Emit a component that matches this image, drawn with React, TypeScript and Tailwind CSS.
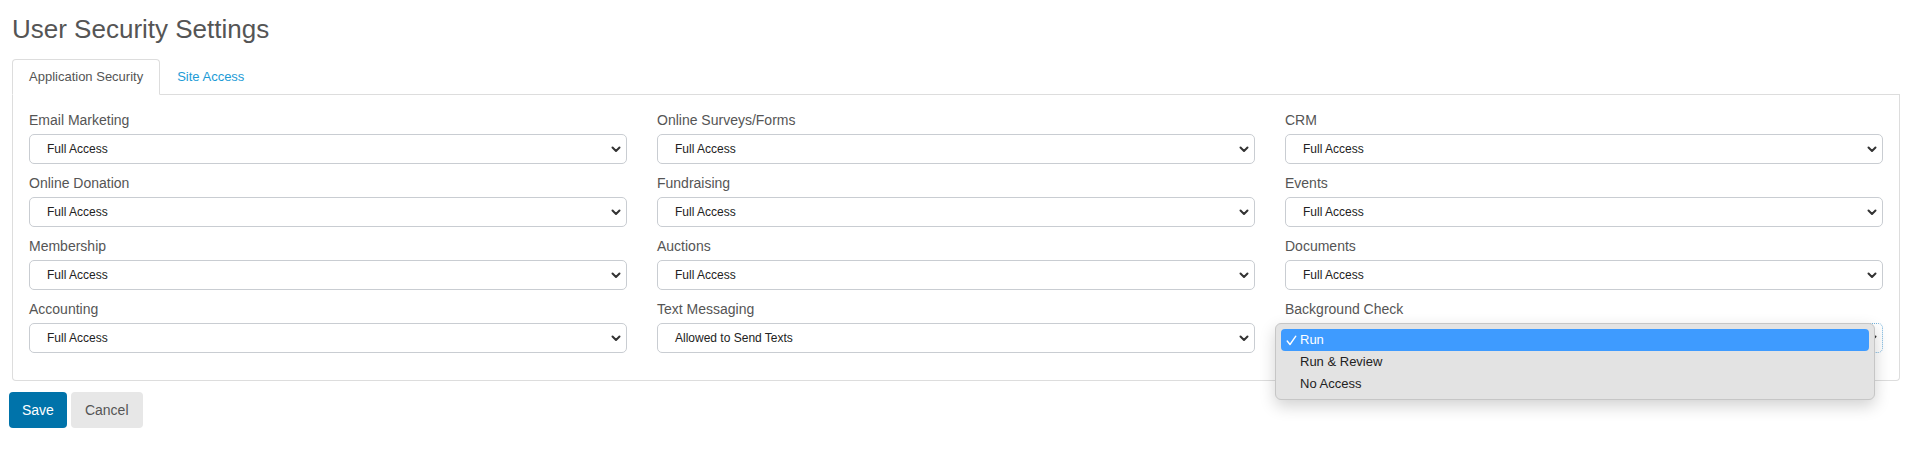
import React from 'react';

type Field = { label: string; value: string; open?: boolean };

const fields: Field[] = [
  { label: 'Email Marketing', value: 'Full Access' },
  { label: 'Online Surveys/Forms', value: 'Full Access' },
  { label: 'CRM', value: 'Full Access' },
  { label: 'Online Donation', value: 'Full Access' },
  { label: 'Fundraising', value: 'Full Access' },
  { label: 'Events', value: 'Full Access' },
  { label: 'Membership', value: 'Full Access' },
  { label: 'Auctions', value: 'Full Access' },
  { label: 'Documents', value: 'Full Access' },
  { label: 'Accounting', value: 'Full Access' },
  { label: 'Text Messaging', value: 'Allowed to Send Texts' },
  { label: 'Background Check', value: 'Run', open: true },
];

const backgroundOptions = ['Run', 'Run & Review', 'No Access'];

function Chevron() {
  return (
    <svg width="10" height="7" viewBox="0 0 10 7" className="text-[#333]">
      <path d="M1.5 1.5 L5 5 L8.5 1.5" fill="none" stroke="currentColor" strokeWidth="2" strokeLinecap="round" strokeLinejoin="round" />
    </svg>
  );
}

function SelectBox({ value, focused }: { value: string; focused?: boolean }) {
  return (
    <div
      className={`flex h-[30px] items-center justify-between rounded-[5px] border bg-white pl-[17px] pr-[5px] text-[12px] text-[#222] ${
        focused ? 'border-dotted border-[#74b3dd]' : 'border-[#c9cdd2]'
      }`}
    >
      <span>{value}</span>
      <Chevron />
    </div>
  );
}

function OptionsPopup({ options, selected }: { options: string[]; selected: string }) {
  return (
    <div className="absolute left-[-10px] top-0 z-10 w-[600px] rounded-[6px] border border-[#c6c6c6] bg-[#e3e3e3] px-[5px] pb-[4px] pt-[5px] shadow-[0_6px_16px_rgba(0,0,0,0.18)]">
      {options.map((opt) => {
        const active = opt === selected;
        return (
          <div
            key={opt}
            className={`flex h-[22px] items-center rounded-[4px] text-[13px] ${
              active ? 'bg-[#3e9bff] text-white' : 'text-[#222]'
            }`}
          >
            <span className="flex w-[19px] justify-center pl-[1px]">
              {active && (
                <svg width="11" height="11" viewBox="0 0 11 11">
                  <path d="M1.2 6 L4 9.5 L9.8 1.2" fill="none" stroke="white" strokeWidth="1.4" strokeLinecap="round" strokeLinejoin="round" />
                </svg>
              )}
            </span>
            <span>{opt}</span>
          </div>
        );
      })}
    </div>
  );
}

export default function App() {
  return (
    <div
      className="min-h-screen bg-white pl-[12px] pr-[7px] pt-[13px]"
      style={{ fontFamily: '"Liberation Sans", Arial, sans-serif' }}
    >
      <h1 className="text-[26px] font-normal leading-[32px] text-[#555]">User Security Settings</h1>

      <div className="mt-[14px] flex border-b border-[#ddd]">
        <div className="-mb-px flex h-[36px] items-center rounded-t-[4px] border border-[#ddd] border-b-white bg-white px-4 text-[13px] text-[#555]">
          Application Security
        </div>
        <div className="-mb-px flex h-[36px] items-center border border-transparent px-4 text-[13px] text-[#1c9bd6]">
          Site Access
        </div>
      </div>

      <div className="rounded-b-[4px] border-x border-b border-[#ddd] px-4 pb-[27px] pt-[15px]">
        <div className="grid grid-cols-3 gap-x-[30px] gap-y-[9px]">
          {fields.map((f) => (
            <div key={f.label} className="flex flex-col">
              <label className="mb-[4px] h-[20px] text-[14px] leading-[20px] text-[#555]">{f.label}</label>
              <div className="relative">
                <SelectBox value={f.value} focused={f.open} />
                {f.open && <OptionsPopup options={backgroundOptions} selected={f.value} />}
              </div>
            </div>
          ))}
        </div>
      </div>

      <div className="-ml-[3px] mt-[11px] flex gap-[4px]">
        <button className="h-[36px] rounded-[4px] bg-[#0073aa] px-[13px] text-[14px] text-white">Save</button>
        <button className="h-[36px] rounded-[4px] bg-[#e7e7e7] px-[14px] text-[14px] text-[#555]">Cancel</button>
      </div>
    </div>
  );
}
